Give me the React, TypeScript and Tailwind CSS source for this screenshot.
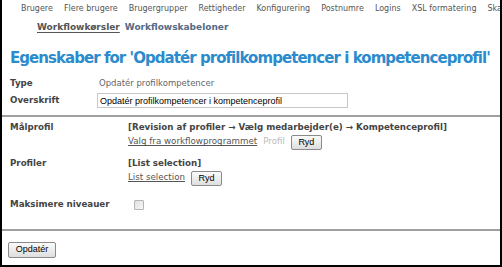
const navItems = [
  "Brugere",
  "Flere brugere",
  "Brugergrupper",
  "Rettigheder",
  "Konfigurering",
  "Postnumre",
  "Logins",
  "XSL formatering",
  "Skabeloner",
];

function RydButton() {
  return (
    <button className="h-[15px] w-[31px] border border-[#8a8a8a] rounded-[2px] bg-gradient-to-b from-[#fbfbfb] to-[#dedede] text-[9px] text-black font-['Liberation_Sans',sans-serif] leading-none">
      Ryd
    </button>
  );
}

export default function App() {
  return (
    <div className="w-[502px] h-[267px] overflow-hidden bg-white border-l-2 border-r-2 border-b-2 border-black font-['DejaVu_Sans',Verdana,sans-serif] text-[#444]">
      {/* top menu */}
      <div className="flex h-[17px] items-center gap-[11px] pl-[19px] whitespace-nowrap text-[8px] text-[#555]">
        {navItems.map((n) => (
          <span key={n}>{n}</span>
        ))}
      </div>

      {/* tabs */}
      <div className="flex h-[22px] items-center gap-[5px] pl-[35px] text-[9px] font-bold">
        <span className="underline underline-offset-2 text-[#555]">Workflowkørsler</span>
        <span className="text-[#546a86]">Workflowskabeloner</span>
      </div>

      <h1 className="h-[36px] flex items-center pt-[3px] pl-[8px] text-[15px] font-bold text-[#2b8bcc] whitespace-nowrap tracking-[-0.95px]">
        Egenskaber for 'Opdatér profilkompetencer i kompetenceprofil'
      </h1>

      {/* basic fields */}
      <div className="pl-[8px] text-[8.7px]">
        <div className="flex h-[15px] items-end">
          <span className="w-[89px] font-bold">Type</span>
          <span className="text-[#666] text-[8.5px]">Opdatér profilkompetencer</span>
        </div>
        <div className="flex h-[21px] items-center">
          <span className="w-[87px] font-bold">Overskrift</span>
          <input
            readOnly
            value="Opdatér profilkompetencer i kompetenceprofil"
            className="w-[251px] h-[15px] border border-[#c8c8c8] px-[2px] text-[9px] text-black font-['Liberation_Sans',sans-serif] outline-none"
          />
        </div>
      </div>

      <div className="mt-[4px] h-[2px] bg-[#a0a0a0]" />

      {/* workflow fields */}
      <div className="pl-[8px] pt-[3px] text-[8.7px]">
        <div className="flex">
          <span className="w-[118px] font-bold leading-[14px]">Målprofil</span>
          <div>
            <div className="font-bold leading-[14px]">
              [Revision af profiler → Vælg medarbejder(e) → Kompetenceprofil]
            </div>
            <div className="flex items-center gap-[6px] h-[16px]">
              <span className="underline text-[#555]">Valg fra workflowprogrammet</span>
              <span className="text-[#bbb]">Profil</span>
              <RydButton />
            </div>
          </div>
        </div>

        <div className="flex mt-[6px]">
          <span className="w-[118px] font-bold leading-[14px]">Profiler</span>
          <div>
            <div className="font-bold leading-[14px]">[List selection]</div>
            <div className="flex items-center gap-[6px] h-[16px]">
              <span className="underline text-[#555]">List selection</span>
              <RydButton />
            </div>
          </div>
        </div>

        <div className="flex items-center mt-[12px] h-[14px]">
          <span className="w-[124px] font-bold">Maksimere niveauer</span>
          <span className="w-[10px] h-[10px] border border-[#b5b5b5] bg-gradient-to-br from-[#e0e0e0] to-[#f8f8f8] rounded-[1px]" />
        </div>
      </div>

      <div className="mt-[17px] h-[2px] bg-[#a0a0a0]" />

      <div className="pl-[6px] pt-[4px]">
        <button className="h-[16px] w-[48px] border border-[#8a8a8a] rounded-[2px] bg-gradient-to-b from-[#fbfbfb] to-[#dedede] text-[9px] text-black font-['Liberation_Sans',sans-serif] leading-none">
          Opdatér
        </button>
      </div>
    </div>
  );
}
